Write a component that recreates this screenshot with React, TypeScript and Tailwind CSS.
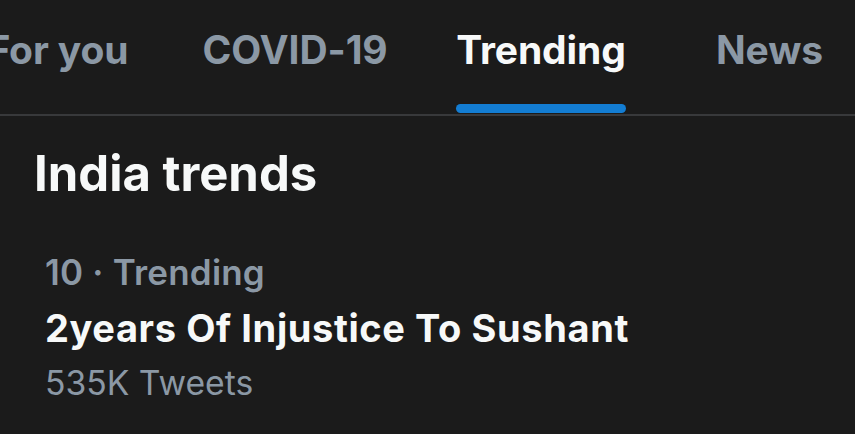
import { ReactNode } from 'react';

interface TabProps {
  label: string;
  active?: boolean;
  className?: string;
}

function Tab({ label, active, className }: TabProps) {
  return (
    <div className={`flex shrink-0 justify-center ${className ?? ''}`}>
      <div className="flex flex-col items-stretch">
        <span
          className={`pt-[26px] text-[39px] font-bold leading-[48px] tracking-[-0.1px] ${
            active ? 'text-[#f7f9f9]' : 'text-[#8b98a5]'
          }`}
        >
          {label}
        </span>
        <span
          className={`mt-[30px] h-[9px] rounded-full ${active ? 'bg-[#137dd3]' : 'bg-transparent'}`}
        />
      </div>
    </div>
  );
}

function TrendItem({ meta, title, count }: { meta: ReactNode; title: string; count: string }) {
  return (
    <div className="flex flex-col pl-[45px] pt-[52px]">
      <span className="text-[35px] font-semibold leading-[36px] tracking-[0.2px] text-[#8b98a5]">{meta}</span>
      <span className="mt-[18px] text-[38px] font-bold leading-[40px] tracking-[0.6px] text-[#f7f9f9]">
        {title}
      </span>
      <span className="mt-[15px] text-[33.7px] leading-[40px] text-[#8b98a5]">{count}</span>
    </div>
  );
}

export default function App() {
  return (
    <div className="h-[434px] w-[855px] overflow-hidden bg-[#1b1b1b] font-['Inter',sans-serif]">
      <div className="flex h-[116px] border-b-2 border-[#38393b] overflow-hidden">
        <Tab label="For you" className="-ml-[42px] w-[200px]" />
        <Tab label="COVID-19" className="w-[274px]" />
        <Tab label="Trending" active className="w-[218px]" />
        <Tab label="News" className="w-[239px]" />
      </div>
      <div className="flex flex-col">
        <h2 className="pl-[34px] pt-[30px] text-[49px] font-bold leading-[56px] text-[#f7f9f9]">
          India trends
        </h2>
        <TrendItem meta="10 · Trending" title="2years Of Injustice To Sushant" count="535K Tweets" />
      </div>
    </div>
  );
}
